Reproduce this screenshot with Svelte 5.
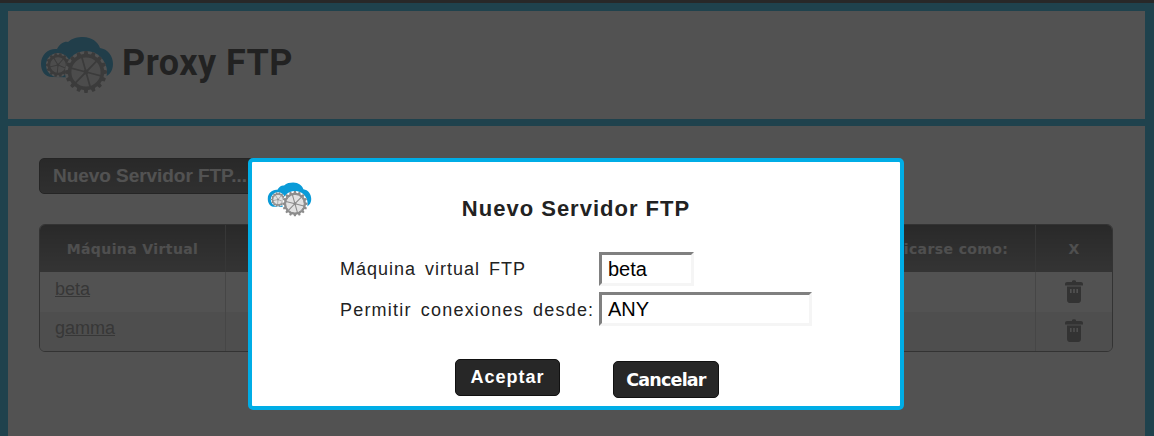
<script>
  function gear(cx, cy, ro, ri, n) {
    const pts = [];
    const step = (Math.PI * 2) / n;
    for (let i = 0; i < n; i++) {
      const a = i * step;
      const w = step * 0.24;
      const add = (r, t) => pts.push((cx + r * Math.cos(t)).toFixed(2) + ' ' + (cy + r * Math.sin(t)).toFixed(2));
      add(ri, a - w * 1.25);
      add(ro, a - w * 0.8);
      add(ro, a + w * 0.8);
      add(ri, a + w * 1.25);
    }
    return 'M' + pts.join('L') + 'Z';
  }
  function spokes(cx, cy, r, n, off) {
    let d = '';
    for (let i = 0; i < n; i++) {
      const t = off + (i * Math.PI * 2) / n;
      d += `M${cx} ${cy}L${(cx + r * Math.cos(t)).toFixed(2)} ${(cy + r * Math.sin(t)).toFixed(2)}`;
    }
    return d;
  }
  const gears = [
    { cx: 18, cy: 29, ro: 12, ri: 10.4, n: 14, rim: 8.6, sw: 1.8, off: 0.4, k: 5 },
    { cx: 46, cy: 36, ro: 21, ri: 18.2, n: 16, rim: 15.4, sw: 3, off: 0.25, k: 6 }
  ];
  const rows = [
    { host: 'beta', from: 'ANY', user: 'beta' },
    { host: 'gamma', from: 'ANY', user: 'gamma' }
  ];
</script>

{#snippet logo(cls)}
  <svg class={cls} viewBox="0 0 74 58" aria-hidden="true">
    <path class="cloud" d="M12 41C5 41 1 35 1 28C1 18 9 12 17 13C20 7 25 5 28 6C32 2 38 1 43 1C52 1 58 6 60 12C68 13 73 20 73 28C73 36 68 41 61 42L12 41Z" />
    {#each gears as g}
      <circle class="hub-bg" cx={g.cx} cy={g.cy} r={g.ro} />
      <path class="tooth" d={gear(g.cx, g.cy, g.ro, g.ri, g.n)} />
      <circle class="inner" cx={g.cx} cy={g.cy} r={g.rim} />
      <path class="spoke" stroke-width={g.sw * 0.6} d={spokes(g.cx, g.cy, g.rim, g.k, g.off)} />
      <circle class="tooth" cx={g.cx} cy={g.cy} r={g.sw * 0.8} />
    {/each}
  </svg>
{/snippet}

<div class="page">
  <header class="panel head">
    {@render logo('logo-big')}
    <span class="brand">Proxy FTP</span>
  </header>

  <main class="panel body">
    <button class="new">Nuevo Servidor FTP...</button>
    <table>
      <thead>
        <tr>
          <th class="c1">Máquina Virtual</th>
          <th>Permitir conexiones desde</th>
          <th class="c3">Identificarse como:</th>
          <th class="c4">X</th>
        </tr>
      </thead>
      <tbody>
        {#each rows as r}
          <tr>
            <td><a href="#top">{r.host}</a></td>
            <td class="mid">{r.from}</td>
            <td>{r.user}</td>
            <td class="x">
              <svg class="trash" viewBox="0 0 18 24" aria-hidden="true">
                <path d="M7 2.2C7 .8 11 .8 11 2.2V3H16C17.2 3 18 3.8 18 5V6.5H0V5C0 3.8.8 3 2 3H7Z" />
                <path fill-rule="evenodd" d="M2 7.5H16V21C16 22.6 15 24 13.4 24H4.6C3 24 2 22.6 2 21ZM5 10V14H6.6V10ZM8.2 10V14H9.8V10ZM11.4 10V14H13V10Z" />
              </svg>
            </td>
          </tr>
        {/each}
      </tbody>
    </table>
  </main>
</div>

<div class="overlay"></div>

<div class="modal">
  {@render logo('logo-small')}
  <h2>Nuevo Servidor FTP</h2>
  <div class="form">
    <label for="m">Máquina virtual FTP</label>
    <input id="m" class="short" value="beta" />
    <label for="p" class="wide">Permitir conexiones desde:</label>
    <input id="p" class="long" value="ANY" />
  </div>
  <div class="actions">
    <button class="ok">Aceptar</button>
    <button class="cancel">Cancelar</button>
  </div>
</div>

<style>
  :global(body) {
    margin: 0;
    background: #00ade6;
    font-family: "Liberation Sans", Arial, sans-serif;
  }
  .page {
    height: 425px;
    border-top: 3px solid #303030;
    padding: 8px 9px 0 8px;
    display: flex;
    flex-direction: column;
    gap: 7px;
    overflow: hidden;
  }
  .panel { background: #fff; }
  .head {
    height: 108px;
    display: flex;
    align-items: center;
    padding-left: 32px;
    gap: 8px;
    flex: none;
  }
  .logo-big { width: 74px; height: 58px; }
  .brand {
    font-family: Roboto, sans-serif;
    font-weight: 700;
    font-size: 36px;
    letter-spacing: .45px;
    color: #111;
    margin-top: -4px;
  }
  .body {
    flex: 1;
    padding: 32px 32px 0 31px;
  }
  .new {
    display: block;
    height: 36px;
    width: 222px;
    padding: 0 0 0 13px;
    text-align: left;
    border: 1px solid #222;
    border-radius: 5px;
    background: linear-gradient(#333, #555);
    color: #fff;
    font: 700 19px "Liberation Sans", sans-serif;
    letter-spacing: -.05px;
    white-space: nowrap;
  }
  table {
    margin-top: 30px;
    width: 1074px;
    table-layout: fixed;
    border-collapse: separate;
    border-spacing: 0;
    border: 1px solid #666;
    border-radius: 6px;
    overflow: hidden;
  }
  th {
    height: 47px;
    padding: 0;
    background: linear-gradient(#343434, #6a6a6a);
    color: #eee;
    font: 700 14px "DejaVu Sans", sans-serif;
    letter-spacing: .4px;
    border-left: 1px solid #777;
  }
  th:first-child, td:first-child { border-left: 0; }
  .c1 { width: 185px; }
  .c3 { width: 213px; }
  .c4 { width: 76px; }
  td {
    height: 39.5px;
    padding: 0 15px 6px;
    box-sizing: border-box;
    font-size: 18px;
    color: #777;
    border-left: 1px solid #c4c4c4;
    background: #fff;
    line-height: 1;
  }
  td a { color: #777; }
  tbody tr:nth-child(2) td { background: #e8e8e8; }
  .mid { text-align: center; }
  .x { text-align: center; padding: 0 0 2px; }
  .trash { width: 18px; height: 24px; fill: #666; display: block; margin: 0 auto; }

  .overlay {
    position: fixed;
    inset: 0;
    background: rgba(39, 39, 39, .8);
  }
  .modal {
    position: fixed;
    left: 248px;
    top: 158px;
    width: 656px;
    height: 252px;
    box-sizing: border-box;
    background: #fff;
    border: 4px solid #00ade6;
    border-radius: 5px;
  }
  .logo-small {
    position: absolute;
    left: 15px;
    top: 20px;
    width: 45px;
    height: 35px;
  }
  h2 {
    margin: 0;
    padding-top: 33px;
    text-align: center;
    font: 700 22px/27px "Liberation Sans", sans-serif;
    letter-spacing: 1px;
    color: #222;
  }
  .form {
    margin-top: 30px;
    padding-left: 88px;
    display: grid;
    grid-template-columns: 259px auto;
    row-gap: 6px;
    justify-content: start;
    align-items: center;
  }
  label {
    font-size: 18px;
    letter-spacing: 1px;
    word-spacing: 3px;
    color: #222;
    white-space: nowrap;
    margin-top: 1px;
  }
  .wide { letter-spacing: 1.2px; margin-top: 2px; }
  input {
    box-sizing: border-box;
    height: 34px;
    padding: 0 6px;
    border-width: 3px;
    border-style: solid;
    border-color: #808080 #f5f5f5 #f5f5f5 #808080;
    font: 20px "Liberation Sans", sans-serif;
    color: #000;
    background: #fff;
    outline: 0;
  }
  .short { width: 95px; }
  .long { width: 213px; }
  .actions {
    margin-top: 33px;
    padding-left: 203px;
    display: flex;
    align-items: flex-start;
    gap: 53px;
  }
  .actions button {
    height: 37px;
    background: #272727;
    color: #fff;
    border: 1px solid #111;
    border-radius: 5px;
    padding: 0;
  }
  .actions .ok { width: 105px; font: 700 18px "Liberation Sans", sans-serif; letter-spacing: 1px; }
  .actions .cancel { width: 106px; margin-top: 2px; font: 700 17.5px "DejaVu Sans", sans-serif; letter-spacing: -.8px; }

  .cloud { fill: #0a9bd8; }
  .hub-bg { fill: #fff; }
  .tooth { fill: #8c8c8c; }
  .inner { fill: #fff; fill-opacity: .75; stroke: #8c8c8c; stroke-width: 1.6; }
  .spoke { stroke: #8c8c8c; fill: none; }
</style>
